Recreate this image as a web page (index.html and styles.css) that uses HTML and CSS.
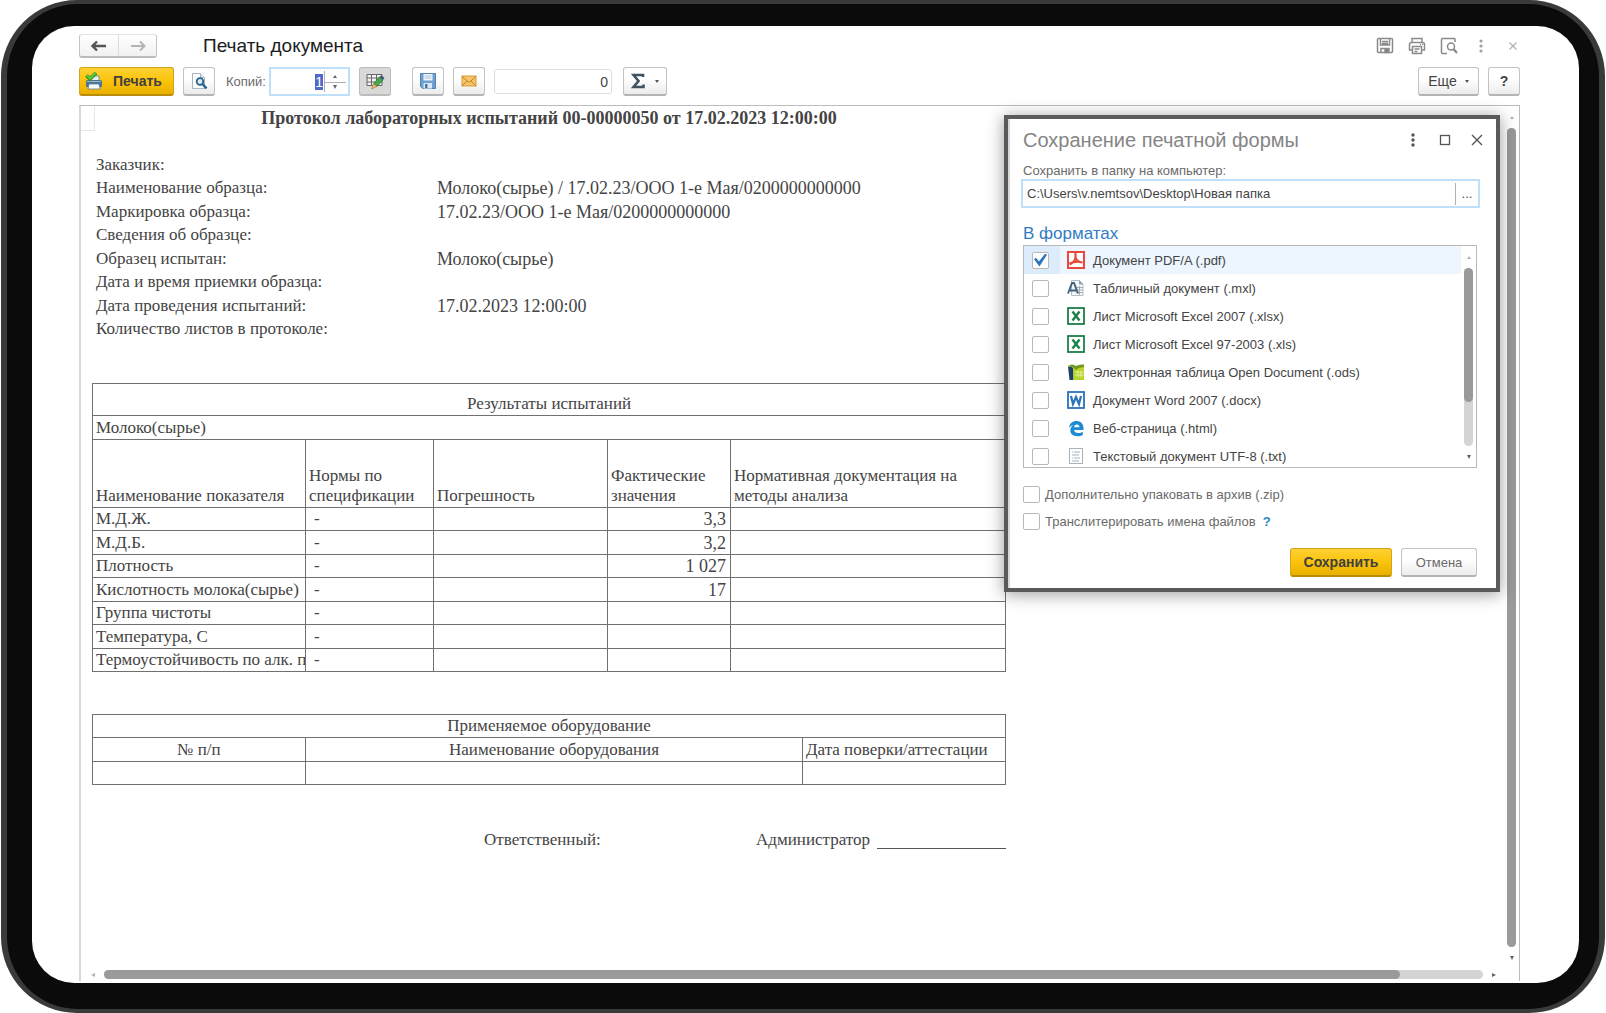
FILE: index.html
```html
<!DOCTYPE html>
<html lang="ru">
<head>
  <meta charset="UTF-8" />
  <meta name="viewport" content="width=device-width, initial-scale=1.0" />
  <title>Печать документа</title>
  <link rel="stylesheet" href="styles.css">
</head>
<body>
  <div class="device">
    <div class="screen">
      <header class="titlebar">
        <div class="nav">
          <button class="nav-btn" aria-label="Назад">
            <svg width="16" height="12" viewBox="0 0 16 12"><path d="M1 6h14M6 1.500L1.500 6 6 10.500" fill="none" stroke="#555" stroke-width="2.400"/></svg>
          </button>
          <button class="nav-btn" aria-label="Вперед">
            <svg width="16" height="12" viewBox="0 0 16 12"><path d="M1 6h14M10 1.500L14.500 6 10 10.500" fill="none" stroke="#b4b4b4" stroke-width="2"/></svg>
          </button>
        </div>
        <h1>Печать документа</h1>
        <div class="window-tools">
          <button class="plain" aria-label="Сохранить">
            <svg width="18" height="18" viewBox="0 0 18 18" fill="none" stroke="#8a8a8a" stroke-width="1.500"><rect x="1.500" y="1.500" width="15" height="14" rx="1"/><path d="M4.500 2v6h9V2M6 4.500h6M6 6.500h6"/><path d="M5 15.500v-4h8v4"/><rect x="9" y="12.500" width="3" height="3" fill="#777"/></svg>
          </button>
          <button class="plain" aria-label="Печать">
            <svg width="18" height="18" viewBox="0 0 18 18" fill="none" stroke="#8a8a8a" stroke-width="1.500"><path d="M4 5V1.500h10V5M4 13H1.500V7.500q0-2 2-2h11q2 0 2 2V13H14"/><path d="M4.500 9.500h9v7h-9zM6.500 12h5M6.500 14.500h3"/><path d="M12 7.500h1M14 7.500h1"/></svg>
          </button>
          <button class="plain" aria-label="Просмотр">
            <svg width="18" height="18" viewBox="0 0 18 18" fill="none" stroke="#8a8a8a" stroke-width="1.500"><path d="M7 16.500H2.500q-1 0-1-1v-13q0-1 1-1h11.500q1 0 1 1V5"/><circle cx="11" cy="9.500" r="3.500"/><path d="M13.500 12l3.500 4" stroke-width="2.200"/></svg>
          </button>
          <button class="plain" aria-label="Меню">
            <svg width="18" height="18" viewBox="0 0 18 18" fill="#a0a0a0"><circle cx="9" cy="4" r="1.600"/><circle cx="9" cy="9" r="1.600"/><circle cx="9" cy="14" r="1.600"/></svg>
          </button>
          <button class="plain" aria-label="Закрыть">
            <svg width="18" height="18" viewBox="0 0 18 18"><path d="M5.500 5.500l7 7M12.500 5.500l-7 7" stroke="#b0b0b0" stroke-width="1.200"/></svg>
          </button>
        </div>
      </header>

      <div class="toolbar">
        <button class="btn btn-primary btn-print">
          <svg width="18" height="18" viewBox="0 0 18 18"><path d="M5 4h9v5H5z" fill="#e8f0f6" stroke="#5c7f99" stroke-width=".8"/><rect x="1" y="8" width="16" height="7" rx="1.500" fill="#4b7291"/><path d="M2 9.500h14" stroke="#9bbad0"/><path d="M4 12h10l1 5H3z" fill="#f7fafc" stroke="#5c7f99" stroke-width=".8"/><path d="M1.500 3.500L5 7l6-6" fill="none" stroke="#2e8b20" stroke-width="3.600"/><path d="M2 3.500l3 3L10.500 1" fill="none" stroke="#62cc3c" stroke-width="2"/></svg>
          Печать
        </button>
        <button class="btn icon-btn" aria-label="Предварительный просмотр">
          <svg width="18" height="18" viewBox="0 0 18 18"><path d="M2.500 1.500h8l4 4v11h-12z" fill="#fbfcfd" stroke="#a9b5bf"/><path d="M10.500 1.500v4h4" fill="#e3e9ee" stroke="#a9b5bf"/><circle cx="10" cy="9.500" r="3.300" fill="#dceaf4" stroke="#2c638c" stroke-width="1.800"/><path d="M12.500 12l4 4.500" stroke="#2c638c" stroke-width="2.600"/></svg>
        </button>
        <label class="copies-label" for="copies">Копий:</label>
        <div class="copies">
          <input type="text" id="copies" inputmode="numeric" value="1" />
          <div class="spin">
            <button aria-label="Больше"><i class="tri tri-up"></i></button>
            <button aria-label="Меньше"><i class="tri tri-down"></i></button>
          </div>
        </div>
        <button class="btn icon-btn pressed" aria-label="Редактирование">
          <svg width="20" height="18" viewBox="0 0 20 18"><path d="M2 2.500h15v11H2z" fill="#f2f2f2" stroke="#666"/><path d="M2 6h15M2 10h15M6.500 2.500v11M11.500 2.500v11" stroke="#666"/><path d="M8.500 11.500l6-6.500 3.500 3-6 6.500z" fill="#42a84c" stroke="#2c7a38" stroke-width=".8"/><path d="M14.500 5l1.700-1.700 3.300 2.700-1.500 2z" fill="#3d5b72"/><path d="M8.500 11.500l3.500 3L6.500 17z" fill="#eab667" stroke="#a87b35" stroke-width=".6"/></svg>
        </button>
        <button class="btn icon-btn gap-before" aria-label="Записать">
          <svg width="18" height="18" viewBox="0 0 18 18"><path d="M1.500 1.500h15v15H3.500l-2-2z" fill="#6f9fd0" stroke="#5683b2"/><path d="M4.500 2h9v6.500h-9z" fill="#f1f6fb"/><path d="M5.500 4h7M5.500 6h7" stroke="#a9c2da"/><path d="M4.500 11h8.500v5.500H4.500z" fill="#dbe7f2"/><path d="M6 12h2.500v4H6z" fill="#4777a8"/></svg>
        </button>
        <button class="btn icon-btn" aria-label="Отправить по почте">
          <svg width="16" height="12" viewBox="0 0 16 12"><rect x="1" y="1" width="14" height="10" fill="#f7c66b" stroke="#d89a3c"/><path d="M1 1.500L8 7.500l7-6M1 11l5-5M15 11l-5-5" fill="none" stroke="#c47f27"/></svg>
        </button>
        <input class="sum-field" type="text" value="0" aria-label="Сумма" readonly />
        <button class="btn sum-btn" aria-label="Функция">
          <svg width="14" height="16" viewBox="0 0 14 16"><path d="M12 4V2H2.500l5 6-5 6H12.500v-2.500" fill="none" stroke="#3f5261" stroke-width="2.600"/></svg>
          <i class="tri tri-menu"></i>
        </button>
        <button class="btn more-btn">Еще <i class="tri tri-menu"></i></button>
        <button class="btn icon-btn help-btn">?</button>
      </div>

      <main class="viewer">
        <article class="paper">
          <div class="corner"></div>
          <h2>Протокол лабораторных испытаний 00-00000050 от 17.02.2023 12:00:00</h2>
          <dl class="info">
            <dt>Заказчик:</dt><dd></dd>
            <dt>Наименование образца:</dt><dd>Молоко(сырье) / 17.02.23/ООО 1-е Мая/0200000000000</dd>
            <dt>Маркировка образца:</dt><dd>17.02.23/ООО 1-е Мая/0200000000000</dd>
            <dt>Сведения об образце:</dt><dd></dd>
            <dt>Образец испытан:</dt><dd>Молоко(сырье)</dd>
            <dt>Дата и время приемки образца:</dt><dd></dd>
            <dt>Дата проведения испытаний:</dt><dd>17.02.2023 12:00:00</dd>
            <dt>Количество листов в протоколе:</dt><dd></dd>
          </dl>

          <table class="results">
            <colgroup><col class="c-name"><col class="c-norm"><col class="c-error"><col class="c-value"><col></colgroup>
            <thead>
              <tr class="caption-row"><th colspan="5">Результаты испытаний</th></tr>
              <tr><td colspan="5">Молоко(сырье)</td></tr>
              <tr class="head-row">
                <th>Наименование показателя</th>
                <th>Нормы по спецификации</th>
                <th>Погрешность</th>
                <th>Фактические значения</th>
                <th>Нормативная документация на методы анализа</th>
              </tr>
            </thead>
            <tbody>
              <tr><td>М.Д.Ж.</td><td class="dash">-</td><td></td><td class="num">3,3</td><td></td></tr>
              <tr><td>М.Д.Б.</td><td class="dash">-</td><td></td><td class="num">3,2</td><td></td></tr>
              <tr><td>Плотность</td><td class="dash">-</td><td></td><td class="num">1 027</td><td></td></tr>
              <tr><td>Кислотность молока(сырье)</td><td class="dash">-</td><td></td><td class="num">17</td><td></td></tr>
              <tr><td>Группа чистоты</td><td class="dash">-</td><td></td><td></td><td></td></tr>
              <tr><td>Температура, С</td><td class="dash">-</td><td></td><td></td><td></td></tr>
              <tr><td>Термоустойчивость по алк. п</td><td class="dash">-</td><td></td><td></td><td></td></tr>
            </tbody>
          </table>

          <table class="equipment">
            <colgroup><col class="c-name"><col><col class="c-date"></colgroup>
            <tbody>
              <tr><th colspan="3">Применяемое оборудование</th></tr>
              <tr><th>№ п/п</th><th>Наименование оборудования</th><th class="left">Дата поверки/аттестации</th></tr>
              <tr><td></td><td></td><td></td></tr>
            </tbody>
          </table>

          <div class="sign">
            <span>Ответственный:</span>
            <span class="sign-name">Администратор</span>
            <span class="sign-line"></span>
          </div>
        </article>

        <div class="vbar">
          <i class="tri tri-up faded"></i>
          <div class="track"><div class="thumb"></div></div>
          <i class="tri tri-down"></i>
        </div>
        <div class="hbar">
          <i class="tri tri-left faded"></i>
          <div class="track"><div class="thumb"></div></div>
          <i class="tri tri-right"></i>
        </div>

        <section class="dialog" role="dialog" aria-labelledby="dialog-title">
          <header class="dialog-head">
            <h2 id="dialog-title">Сохранение печатной формы</h2>
            <button class="plain" aria-label="Меню">
              <svg width="18" height="18" viewBox="0 0 18 18" fill="#555"><circle cx="9" cy="4" r="1.700"/><circle cx="9" cy="9" r="1.700"/><circle cx="9" cy="14" r="1.700"/></svg>
            </button>
            <button class="plain" aria-label="Развернуть">
              <svg width="18" height="18" viewBox="0 0 18 18"><rect x="4.500" y="4.500" width="9" height="9" fill="none" stroke="#555" stroke-width="1.300"/></svg>
            </button>
            <button class="plain" aria-label="Закрыть">
              <svg width="18" height="18" viewBox="0 0 18 18"><path d="M4 4l10 10M14 4L4 14" stroke="#555" stroke-width="1.400"/></svg>
            </button>
          </header>

          <label class="path-label" for="path">Сохранить в папку на компьютер:</label>
          <div class="path">
            <input type="text" id="path" value="C:\Users\v.nemtsov\Desktop\Новая папка" />
            <button aria-label="Выбрать папку">...</button>
          </div>

          <h3>В форматах</h3>
          <div class="formats">
            <ul>
              <li class="selected"><label>
                <input type="checkbox" checked />
                <svg width="18" height="18" viewBox="0 0 18 18"><rect x="1" y="1" width="16" height="16" fill="#fff" stroke="#e8473b" stroke-width="2"/><path d="M8.500 2v4.500c0 3-2 5-6 7M8.500 6.500c1 3 3 4.500 7 5M2.500 12.800c3-1.800 8.500-2.500 13-1.300" fill="none" stroke="#e8473b" stroke-width="2.200"/></svg>
                Документ PDF/A (.pdf)</label></li>
              <li><label>
                <input type="checkbox" />
                <svg width="18" height="18" viewBox="0 0 18 18"><path d="M4.500 1.500h8l3.500 3.500v11.500H4.500z" fill="#f4f6f8" stroke="#b5bfc8"/><path d="M12.500 1.500V5H16" fill="#8fa5b5" stroke="#8fa5b5"/><path d="M9 8.500h7M9 11h7M9 13.500h7M12.500 7v9" stroke="#a5b0b9"/><path d="M1 14.500L5 4h2l4 10.500M3 11.500h6" fill="none" stroke="#44627a" stroke-width="1.900"/></svg>
                Табличный документ (.mxl)</label></li>
              <li><label>
                <input type="checkbox" />
                <svg width="18" height="18" viewBox="0 0 18 18"><rect x="1" y="1" width="16" height="16" fill="#fff" stroke="#1c8048" stroke-width="1.800"/><path d="M5.500 4.500l7 9M12.500 4.500l-7 9" stroke="#1c8048" stroke-width="2.400"/></svg>
                Лист Microsoft Excel 2007 (.xlsx)</label></li>
              <li><label>
                <input type="checkbox" />
                <svg width="18" height="18" viewBox="0 0 18 18"><rect x="1" y="1" width="16" height="16" fill="#fff" stroke="#1c8048" stroke-width="1.800"/><path d="M5.500 4.500l7 9M12.500 4.500l-7 9" stroke="#1c8048" stroke-width="2.400"/></svg>
                Лист Microsoft Excel 97-2003 (.xls)</label></li>
              <li><label>
                <input type="checkbox" />
                <svg width="18" height="18" viewBox="0 0 18 18"><path d="M1 3.500q3-.5 5.500 1.500V17H2.500z" fill="#1b4263"/><path d="M6 4h11v13H6.500z" fill="#b9d42c"/><path d="M8 9h8.500M8 12h8.500M11 8v6M14 8v6" stroke="#e4ef9e"/><path d="M1 3q4-3 8 0 3-2 8-1.500V4q-6 .5-8 3-2-3-8-4z" fill="#6f9b1d"/></svg>
                Электронная таблица Open Document (.ods)</label></li>
              <li><label>
                <input type="checkbox" />
                <svg width="18" height="18" viewBox="0 0 18 18"><rect x="1" y="1" width="16" height="16" fill="#fff" stroke="#2b72bb" stroke-width="1.800"/><path d="M4 5l2 8L9 6l3 7 2-8" fill="none" stroke="#2b72bb" stroke-width="2.200"/></svg>
                Документ Word 2007 (.docx)</label></li>
              <li><label>
                <input type="checkbox" />
                <svg width="18" height="18" viewBox="0 0 18 18"><path fill="#1e8ad6" fill-rule="evenodd" d="M2 9C2.500 4.500 5.500 2 9.500 2 14 2 16.500 5.300 16.500 9v2H7c.2 2 2 3 4.300 3 1.800 0 3.200-.5 4.500-1.300v3c-1.500 1-3.300 1.500-5.300 1.500C6 17.200 3.300 15 3.300 11.500c0-2.200 1-4 2.900-5.200C4.300 6.600 3 7.500 2 9zM7 8.200h5.500C12.500 6.500 11.500 5.400 9.800 5.400S7.300 6.500 7 8.200z"/></svg>
                Веб-страница (.html)</label></li>
              <li><label>
                <input type="checkbox" />
                <svg width="18" height="18" viewBox="0 0 18 18"><rect x="2.500" y="1.500" width="13" height="15" fill="#fff" stroke="#a4b3bd"/><path d="M5 5h1M7 5h6M5 8h7M5 11h1M7 11h6M5 14h7" stroke="#a4b3bd"/></svg>
                Текстовый документ UTF-8 (.txt)</label></li>
            </ul>
            <div class="vbar">
              <i class="tri tri-up faded"></i>
              <div class="track"><div class="thumb"></div></div>
              <i class="tri tri-down"></i>
            </div>
          </div>

          <div class="options">
            <label><input type="checkbox" /> Дополнительно упаковать в архив (.zip)</label>
            <div class="option">
              <label><input type="checkbox" /> Транслитерировать имена файлов</label>
              <a href="#">?</a>
            </div>
          </div>

          <footer class="dialog-foot">
            <button class="btn btn-primary save-btn">Сохранить</button>
            <button class="btn cancel-btn">Отмена</button>
          </footer>
        </section>
      </main>
    </div>
  </div>

  <script>
    document.getElementById("copies").select();
  </script>
</body>
</html>
```
FILE: styles.css
```css
* {
  box-sizing: border-box;
}
body {
  margin: 0;
  background: #ffffff;
  color: #444444;
  font-family: "Liberation Sans", Arial, sans-serif;
  font-size: 14px;
}
h1, h2, h3, ul, dl, dd {
  margin: 0;
  padding: 0;
  font-weight: normal;
}
button, input {
  font: inherit;
  color: inherit;
}
button {
  padding: 0;
  cursor: pointer;
}
svg {
  display: block;
  flex: none;
}

/* tablet frame */
.device {
  display: flex;
  height: 100vh;
  margin: 0 1px;
  padding: 22px 20px 26px 25px;
  background: #0b0b0b;
  border: 6px solid #3a3a3a;
  border-width: 4px 6px;
  border-radius: 76px;
}
.screen {
  flex: 1;
  min-width: 0;
  display: flex;
  flex-direction: column;
  padding: 8px 59px 2px 47px;
  background: #ffffff;
  border-radius: 42px;
  overflow: hidden;
}

/* window title */
.titlebar {
  display: flex;
  align-items: center;
  height: 24px;
}
.nav {
  display: flex;
  height: 24px;
  border: 1px solid #c4c4c4;
  border-top-color: #e4e4e4;
  border-bottom: 2px solid #bcbcbc;
  border-radius: 3px;
  background: linear-gradient(#ffffff, #f1f1f1);
}
.nav-btn {
  display: grid;
  place-items: center;
  width: 38px;
  border: none;
  background: none;
}
.nav-btn + .nav-btn {
  border-left: 1px solid #dddddd;
}
.titlebar h1 {
  margin-left: 46px;
  color: #1c1c1c;
  font-size: 19px;
  line-height: 22px;
}
.window-tools {
  display: flex;
  gap: 14px;
  margin: 0 -2px 0 auto;
}
.plain {
  border: none;
  background: none;
}

/* command bar */
.toolbar {
  display: flex;
  align-items: center;
  gap: 9px;
  margin: 9px 0;
}
.btn {
  display: flex;
  align-items: center;
  justify-content: center;
  height: 29px;
  border: 1px solid #c2c2c2;
  border-bottom: 2px solid #b4b4b4;
  border-radius: 3px;
  background: linear-gradient(#ffffff 40%, #ececec);
}
.btn-primary {
  border-color: #d3a51c;
  border-bottom-color: #b98d0a;
  background: linear-gradient(#fdd035, #fbc30a 50%, #e9b000);
  color: #404040;
  font-weight: bold;
}
.btn-print {
  gap: 10px;
  width: 95px;
  padding-right: 6px;
}
.icon-btn {
  width: 32px;
}
.pressed {
  background: #d9d9d9;
  border-color: #bcbcbc;
}
.gap-before {
  margin-left: 12px;
}
.copies-label {
  margin-left: 2px;
  color: #6a6a6a;
  font-size: 13px;
}
.copies {
  display: flex;
  width: 81px;
  height: 29px;
  margin-left: -6px;
  padding: 2px;
  border: 2px solid #bfe0fa;
}
.copies input {
  flex: 1;
  width: 0;
  padding: 0 1px;
  border: none;
  outline: none;
  text-align: right;
}
.copies input::selection {
  background: #5068c8;
  color: #ffffff;
}
.spin {
  display: grid;
  width: 22px;
  border-left: 1px solid #b0b0b0;
}
.spin button {
  display: grid;
  place-items: center;
  height: 10px;
  border: none;
  background: none;
}
.spin button + button {
  border-top: 1px solid #b0b0b0;
}
.sum-field {
  width: 118px;
  height: 25px;
  padding: 0 3px;
  border: 1px solid #dedede;
  border-radius: 3px;
  text-align: right;
}
.sum-btn {
  gap: 10px;
  width: 44px;
  margin-left: 2px;
}
.more-btn {
  gap: 8px;
  width: 61px;
  margin-left: auto;
}
.help-btn {
  font-weight: bold;
}

/* small arrows */
.tri {
  width: 0;
  height: 0;
  border: 2px solid transparent;
}
.tri-up {
  border-bottom: 3px solid #666666;
  border-top: none;
}
.tri-down {
  border-top: 4px solid #666666;
  border-bottom: none;
}
.tri-left {
  border-right: 4px solid #666666;
  border-left: none;
}
.tri-right {
  border-left: 4px solid #666666;
  border-right: none;
}
.tri-menu {
  border-top: 3px solid #555555;
  border-bottom: none;
}
.faded {
  opacity: 0.5;
}

/* document viewer */
.viewer {
  position: relative;
  flex: 1;
  min-height: 0;
  display: grid;
  grid-template-columns: minmax(0, 1fr) 15px;
  grid-template-rows: minmax(0, 1fr) 13px;
  border: 1px solid #bcbcbc;
  border-left: 2px solid #d8d8d8;
  border-bottom: none;
}
.paper {
  position: relative;
  overflow: hidden;
  color: #444444;
  font-family: "Liberation Serif", "Times New Roman", serif;
  font-size: 17px;
  line-height: 20px;
  padding-left: 11px;
}
.corner {
  position: absolute;
  left: 0;
  top: 0;
  width: 14px;
  height: 25px;
  border: 1px solid #e6e6e6;
  border-width: 0 1px 1px 0;
}
.paper > h2,
.paper > dl,
.paper > table,
.sign {
  width: 914px;
}
.paper > h2 {
  padding-top: 2px;
  font-size: 18px;
  font-weight: bold;
  text-align: center;
}
.info {
  display: grid;
  grid-template-columns: 341px 1fr;
  grid-auto-rows: 1fr;
  align-items: center;
  height: 188px;
  margin-top: 25px;
  padding-left: 4px;
}
.info dd {
  font-size: 18px;
}
table {
  border-collapse: collapse;
  table-layout: fixed;
}
th, td {
  padding: 0 3px;
  border: 1px solid #707070;
  font-weight: normal;
  overflow: hidden;
  white-space: nowrap;
}
tr {
  height: 23px;
}
tr:nth-child(even) {
  height: 24px;
}
.results {
  margin-top: 42px;
}
.results .caption-row {
  height: 32px;
}
.results .caption-row th {
  padding-top: 8px;
}
.results .head-row {
  height: 68px;
}
.head-row th {
  padding-bottom: 1px;
  text-align: left;
  vertical-align: bottom;
  white-space: normal;
}
.c-name {
  width: 213px;
}
.c-norm {
  width: 128px;
}
.c-error {
  width: 174px;
}
.c-value {
  width: 123px;
}
.c-date {
  width: 203px;
}
.results .dash {
  padding-left: 8px;
}
.results .num {
  padding-right: 4px;
  font-size: 18px;
  text-align: right;
}
.left {
  text-align: left;
}
.equipment {
  margin-top: 42px;
}
.sign {
  display: flex;
  align-items: flex-end;
  margin-top: 45px;
  padding-left: 392px;
}
.sign-name {
  margin-left: auto;
}
.sign-line {
  width: 129px;
  margin: 0 0 1px 7px;
  border-bottom: 1px solid #555555;
}

/* scroll bars */
.vbar, .hbar {
  display: flex;
  align-items: center;
  gap: 9px;
}
.vbar {
  flex-direction: column;
  padding: 10px 0 8px;
}
.hbar {
  padding: 0 8px 0 10px;
}
.track {
  flex: 1;
  border-radius: 5px;
  background: #d4d4d4;
}
.thumb {
  border-radius: 5px;
  background: #9a9a9a;
}
.vbar .track {
  width: 9px;
}
.vbar .thumb {
  height: 100%;
}
.hbar .track {
  height: 9px;
}
.hbar .thumb {
  width: 94%;
  height: 9px;
}

/* save dialog */
.dialog {
  position: absolute;
  top: 9px;
  right: 19px;
  width: 496px;
  padding: 9px 19px 11px 15px;
  border: 4px solid #5a5a5a;
  background: #ffffff;
  box-shadow: 0 2px 16px rgba(0, 0, 0, 0.4), inset 2px 0 #d8d8d8;
  font-size: 13px;
}
.dialog-head {
  display: flex;
  align-items: center;
  gap: 14px;
  margin-right: -9px;
}
.dialog-head h2 {
  flex: 1;
  color: #858585;
  font-size: 20px;
  line-height: 24px;
}
.path-label {
  display: block;
  margin-top: 11px;
  color: #6a6a6a;
  line-height: 16px;
}
.path {
  display: flex;
  align-items: center;
  height: 29px;
  margin: 0 -3px 0 -2px;
  border: 2px solid #bfe0fa;
}
.path input {
  flex: 1;
  padding: 0 4px;
  border: none;
  outline: none;
}
.path button {
  width: 23px;
  height: 22px;
  border: none;
  border-left: 1px solid #b0b0b0;
  background: none;
}
.dialog h3 {
  margin-top: 14px;
  color: #2f7cc4;
  font-size: 17px;
  line-height: 23px;
}
.formats {
  display: flex;
  height: 223px;
  border: 1px solid #b8b8b8;
  overflow: hidden;
}
.formats ul {
  flex: 1;
  list-style: none;
}
.formats .vbar {
  width: 15px;
}
.formats .thumb {
  height: 75%;
}
.formats label {
  display: flex;
  align-items: center;
  height: 28px;
  padding-left: 8px;
}
.formats label svg {
  margin: 0 8px 0 18px;
}
.selected {
  background: linear-gradient(to right, #dcecfb 36px, #edf6fe 36px);
}
input[type="checkbox"] {
  appearance: none;
  display: grid;
  place-items: center;
  flex: none;
  width: 17px;
  height: 17px;
  margin: 0;
  border: 1px solid #b8b8b8;
  border-radius: 2px;
  background: #ffffff;
}
input[type="checkbox"]:checked::before {
  content: "";
  width: 13px;
  height: 13px;
  background: #2f74bb;
  clip-path: polygon(0 45%, 16% 33%, 38% 62%, 86% 0, 100% 10%, 42% 100%);
}
.options {
  display: grid;
  gap: 10px;
  margin-top: 18px;
  color: #6a6a6a;
}
.options label {
  display: flex;
  align-items: center;
  gap: 5px;
}
.option {
  display: flex;
  align-items: center;
  gap: 7px;
}
.option a {
  color: #2a86c8;
  font-weight: bold;
  text-decoration: none;
}
.dialog-foot {
  display: flex;
  justify-content: flex-end;
  gap: 9px;
  margin-top: 18px;
}
.save-btn {
  width: 102px;
  font-size: 14px;
}
.cancel-btn {
  width: 76px;
  color: #6a6a6a;
}
```
